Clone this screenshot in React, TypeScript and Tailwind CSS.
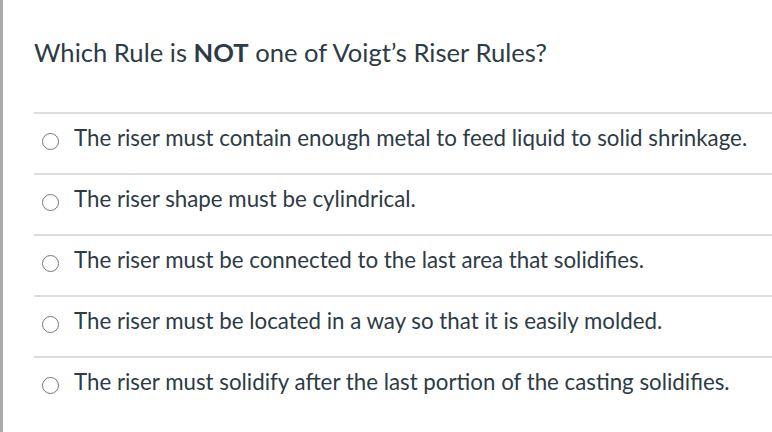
const answers = [
  'The riser must contain enough metal to feed liquid to solid shrinkage.',
  'The riser shape must be cylindrical.',
  'The riser must be connected to the last area that solidifies.',
  'The riser must be located in a way so that it is easily molded.',
  'The riser must solidify after the last portion of the casting solidifies.',
]

export default function App() {
  return (
    <div
      className="h-[432px] w-[772px] overflow-hidden bg-white text-[#2d3b45]"
      style={{ fontFamily: 'Lato, "Open Sans", sans-serif' }}
    >
      <div className="h-full border-l-[3px] border-[#aaaaaa] pl-[31px]">
        <div className="pt-[36px] pb-[44px] text-[25.6px] leading-[32px]">
          Which Rule is <b className="font-bold">NOT</b> one of Voigt&rsquo;s Riser Rules?
        </div>
        {answers.map((a) => (
          <div key={a} className="flex h-[61px] items-start border-t-2 border-[#dddddd] pt-[10px] pl-[8px]">
            <span className="mt-[9px] mr-[15px] block h-[17px] w-[17px] shrink-0 rounded-full border-[1.5px] border-[#767676]" />
            <span className="text-[22.3px] leading-[28px] whitespace-nowrap">{a}</span>
          </div>
        ))}
      </div>
    </div>
  )
}
